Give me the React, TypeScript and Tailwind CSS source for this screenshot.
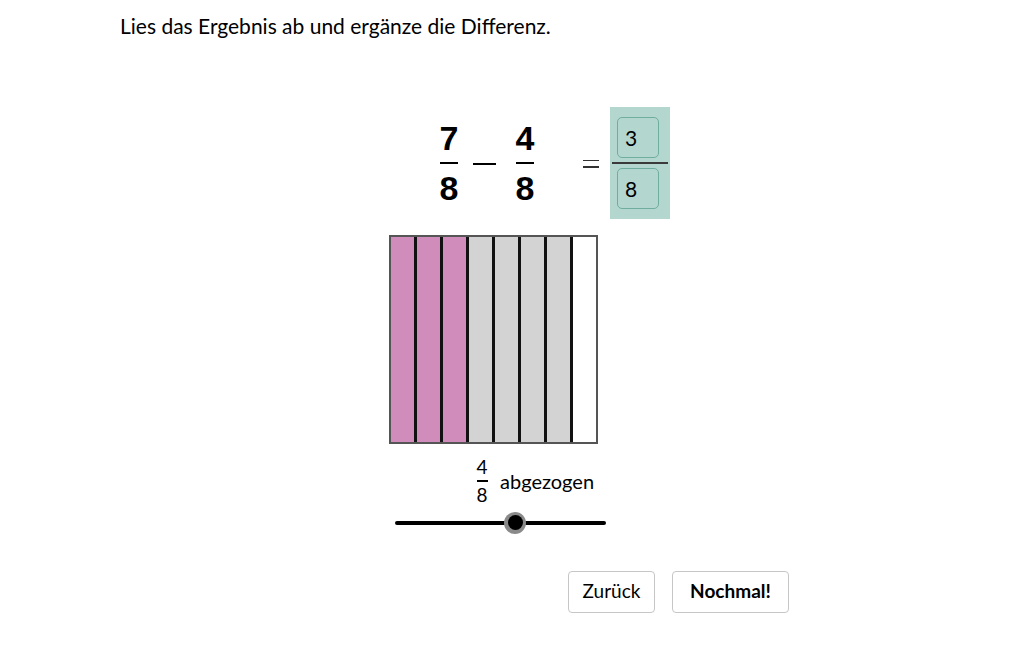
import React from "react";

const Frac = ({ top, bottom }: { top: string; bottom: string }) => (
  <div className="flex w-[20px] flex-col items-center">
    <span className="leading-[34px]">{top}</span>
    <span className="my-[7px] h-[2px] w-[18px] bg-black" />
    <span className="leading-[34px]">{bottom}</span>
  </div>
);

const App = () => {
  const cols = ["pink", "pink", "pink", "gray", "gray", "gray", "gray", "white"];
  const fill: Record<string, string> = {
    pink: "bg-[#d08cbb]",
    gray: "bg-[#d3d3d3]",
    white: "bg-white",
  };

  return (
    <div className="h-[645px] w-[1032px] bg-white text-black" style={{ fontFamily: "Lato, 'Open Sans', sans-serif" }}>
      <div className="pl-[120px] pt-[13px] text-[21px] leading-[26px]">
        Lies das Ergebnis ab und ergänze die Differenz.
      </div>

      {/* equation */}
      <div className="ml-[439px] mt-[68px] flex items-center">
        <div className="flex items-center text-[34px] font-bold" style={{ fontFamily: "'Liberation Sans', Arial, sans-serif" }}>
          <Frac top="7" bottom="8" />
          <span className="ml-[14px] mt-[2px] h-[2px] w-[23px] bg-black" />
          <span className="ml-[19px]">
            <Frac top="4" bottom="8" />
          </span>
        </div>
        <div className="ml-[48px] mt-[1px] flex flex-col gap-[5px]">
          <span className="h-[1.5px] w-[16px] bg-[#333]" />
          <span className="h-[1.5px] w-[16px] bg-[#333]" />
        </div>
        <div className="ml-[11px] flex h-[112px] w-[60px] flex-col items-center bg-[#b3d6cf] py-[10px]">
          <div className="ml-[-4px] flex h-[43px] w-[42px] items-center rounded-[5px] border border-[#6fae9e] pl-[7px] text-[21px]">
            3
          </div>
          <span className="my-[4px] h-[2px] w-[56px] bg-[#3a3a3a]" />
          <div className="ml-[-4px] flex h-[43px] w-[42px] items-center rounded-[5px] border border-[#6fae9e] pl-[7px] text-[21px]">
            8
          </div>
        </div>
      </div>

      {/* fraction bars */}
      <div className="ml-[389px] mt-[16px] flex h-[209px] w-[209px] border-2 border-[#555]">
        {cols.map((c, i) => (
          <div
            key={i}
            className={`h-full flex-1 ${fill[c]} ${i < 7 ? "border-r-[3px] border-[#111]" : ""}`}
          />
        ))}
      </div>

      {/* label */}
      <div className="ml-[476px] mt-[13px] flex items-center">
        <div className="flex w-[12px] flex-col items-center text-[19px]">
          <span className="leading-[20px]">4</span>
          <span className="my-[3px] h-[1.5px] w-[11px] bg-black" />
          <span className="leading-[20px]">8</span>
        </div>
        <span className="ml-[12px] text-[20px]">abgezogen</span>
      </div>

      {/* slider */}
      <div className="ml-[395px] mt-[7px] flex h-[22px] w-[211px] items-center">
        <div className="relative h-[4px] w-full rounded-full bg-black">
          <div className="absolute left-[120px] top-[-9px] flex h-[22px] w-[22px] -translate-x-1/2 items-center justify-center rounded-full bg-[#8a8a8a]">
            <div className="h-[15px] w-[15px] rounded-full bg-black" />
          </div>
        </div>
      </div>

      {/* buttons */}
      <div className="ml-[568px] mt-[37px] flex gap-[17px] text-[19px]">
        <button className="h-[42px] w-[87px] rounded-[4px] border border-[#c6c6c6] bg-white">Zurück</button>
        <button className="h-[42px] w-[117px] rounded-[4px] border border-[#c6c6c6] bg-white font-bold">Nochmal!</button>
      </div>
    </div>
  );
};

export default App;
